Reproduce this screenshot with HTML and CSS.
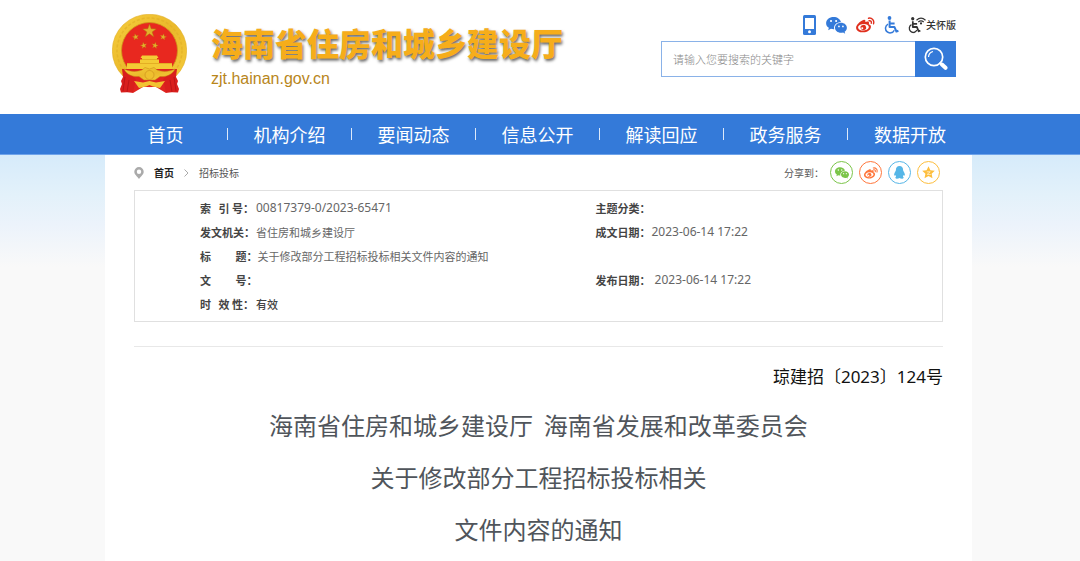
FILE: index.html
```html
<!DOCTYPE html>
<html lang="zh-CN">
<head>
<meta charset="utf-8">
<meta name="viewport" content="width=device-width, initial-scale=1">
<title>海南省住房和城乡建设厅</title>
<link rel="stylesheet" href="styles.css">
</head>
<body>
<svg class="sprite" aria-hidden="true">
  <symbol id="wechat" viewBox="0 0 22 18">
    <path fill="currentColor" fill-rule="evenodd" d="M8 0C3.400 0 0 2.900 0 6.500c0 2.100 1.100 3.800 2.900 5L2.200 14l2.900-1.500c1 .3 1.900.4 2.900.4h.6c-1-4 2.400-7.500 7.100-7.600C15 2.200 11.800 0 8 0zM5.200 3.200a1.100 1.100 0 1 1 0 2.200 1.100 1.100 0 0 1 0-2.200zm5.400 0a1.100 1.100 0 1 1 0 2.200 1.100 1.100 0 0 1 0-2.200z"/>
    <path fill="currentColor" fill-rule="evenodd" d="M15.700 6.200c-3.600 0-6.300 2.400-6.300 5.300s2.700 5.300 6.300 5.300c.8 0 1.600-.1 2.300-.4l2.200 1.300-.6-2c1.500-1 2.400-2.500 2.400-4.200 0-2.900-2.700-5.300-6.300-5.300zm-2.100 2.900a.9.9 0 1 1 0 1.800.9.9 0 0 1 0-1.800zm4.200 0a.9.9 0 1 1 0 1.800.9.9 0 0 1 0-1.800z"/>
  </symbol>
  <symbol id="weibo" viewBox="0 0 20 17">
    <path fill="currentColor" fill-rule="evenodd" d="M7.800 3.200c1.500-.6 2.500.1 2 2 1.800-.8 4.200-.8 4 1.300l-.3 1.100c1.600.5 2.400 1.500 2.300 3-.3 3.300-4 5.600-8.100 5.700C3.600 16.400 0 14.400 0 11.300 0 8.300 4.500 4.300 7.800 3.200zM7.500 7.400c-3.200.2-5.500 1.900-5.300 4 .2 2 2.800 3.300 6 3 3.100-.3 5.500-2 5.300-4-.2-2-2.800-3.200-6-3z"/>
    <path fill="currentColor" fill-rule="evenodd" d="M7.100 8.400a3 2.800 0 1 0 1.200 5.500 3 2.800 0 0 0-1.200-5.500zm-.7 2.500a1.100 1 0 1 1 .3 2 1.100 1 0 0 1-.3-2z"/>
    <path fill="none" stroke="currentColor" stroke-width="1.500" stroke-linecap="round" d="M13.200 1.300c3.600-.8 6.500 2.200 5.300 5.900M13.800 4c1.700-.4 2.900.9 2.300 2.600"/>
  </symbol>
  <symbol id="wheelchair" viewBox="0 0 15 18">
    <circle cx="5.500" cy="2" r="1.900" fill="currentColor"/>
    <path fill="none" stroke="currentColor" stroke-width="2" stroke-linejoin="round" d="M5.600 4.500v6.400h4.800l2 4.600 2-.8M6 7.400h4.600"/>
    <path fill="none" stroke="currentColor" stroke-width="1.500" d="M4 8.200a4.600 4.600 0 1 0 6.300 6"/>
  </symbol>
</svg>

<header class="header">
  <a class="brand" href="#">
    <svg class="emblem" viewBox="0 0 75 80" role="img" aria-label="国徽">
      <defs>
        <linearGradient id="gold" x1="0" y1="0" x2="1" y2="1">
          <stop offset="0" stop-color="#f6cd3c"/><stop offset=".5" stop-color="#eab92b"/><stop offset="1" stop-color="#f6cd3c"/>
        </linearGradient>
        <path id="star" d="M0-7 1.700-2.200 6.700-2.100 2.700.9 4.200 5.700 0 2.800-4.200 5.700-2.700.9-6.700-2.100-1.700-2.200z"/>
      </defs>
      <ellipse cx="37.500" cy="36.500" rx="37.200" ry="36.300" fill="url(#gold)" stroke="#e0ac22" stroke-width=".6"/>
      <circle cx="37.500" cy="36.500" r="32.500" fill="none" stroke="#e0ad25" stroke-width="1.500" stroke-dasharray="3 2" opacity=".6"/>
      <circle cx="37.500" cy="36.500" r="28" fill="#e8281f" stroke="#cf971b" stroke-width=".8"/>
      <g fill="#e3b02c" stroke="#b5710d" stroke-width=".5">
        <use href="#star" x="37.500" y="17"/>
        <use href="#star" transform="translate(23.600 23) scale(.48) rotate(-12)"/>
        <use href="#star" transform="translate(51.200 23) scale(.48) rotate(12)"/>
        <use href="#star" transform="translate(31.700 31.500) scale(.48) rotate(-12)"/>
        <use href="#star" transform="translate(43 31.500) scale(.48) rotate(12)"/>
      </g>
      <path fill="#f4cb35" d="M30 41.500h15l1.500 2.500H45v1.500h2v3.500h13v6H15v-6h13v-3.500h2V44h-1.500z"/>
      <path stroke="#d99b19" stroke-width=".6" d="M29 45.500h17M15 49.500h45"/>
      <path fill="#e02520" d="M13 55h49l-3 8 7 14-12 2-10-6H31l-10 6-12-2 6-14z"/>
      <path fill="#d91f1d" d="M10 55h6l8 11-3 12-12 .5L8 75l2-5-1-3 2-4zM65 55h-6l-8 11 3 12 12 .5 1-3.500-2-5 1-3-2-4z"/>
      <path fill="none" stroke="#b51215" stroke-width=".8" d="m13 63-2 14M17 66l-2 12M62 63l2 14M58 66l2 12"/>
      <path fill="url(#gold)" stroke="#c58512" stroke-width=".5" d="M12 55c6 3 13 3 18 1l3-2.500 4.500 1.500 4.500-1.500 3 2.500c5 2 12 2 18-1-3 6-9 8-15 7.500L43 66H32l-5-3.500C21 63 15 61 12 55z"/>
      <circle cx="37.500" cy="61" r="4.500" fill="#efc02e" stroke="#c98c1c" stroke-width=".6"/>
      <path fill="#f2c331" d="m22 67 9 1.500 6.500-1.500 6.500 1.500 9-1.500-5 7-7-1.500-3.500-1.500-3.500 1.500-7 1.500z"/>
    </svg>
    <span class="brand-text">
      <span class="brand-name">海南省住房和城乡建设厅</span>
      <span class="brand-url">zjt.hainan.gov.cn</span>
    </span>
  </a>
  <div class="tools">
    <nav class="quick" aria-label="快捷入口">
      <a class="blue" href="#" aria-label="手机版"><svg width="15" height="20" viewBox="0 0 15 20"><rect x="1" width="13" height="20" rx="1.500" fill="currentColor"/><path fill="#fff" d="M3 3h9v11H3z"/><circle cx="7.500" cy="16.800" r="1.500" fill="#fff"/></svg></a>
      <a class="blue" href="#" aria-label="微信"><svg width="21" height="17"><use href="#wechat"/></svg></a>
      <a class="red" href="#" aria-label="微博"><svg width="19" height="16"><use href="#weibo"/></svg></a>
      <a class="blue" href="#" aria-label="无障碍"><svg width="15" height="18"><use href="#wheelchair"/></svg></a>
      <a class="care" href="#"><svg width="18" height="17" viewBox="0 0 18 17"><g transform="scale(.86 .92)"><use href="#wheelchair" width="15" height="18"/></g><path fill="none" stroke="currentColor" stroke-width="1.200" d="M8.500 3.200q4.500-4 9 0M10.300 5q2.700-2.400 5.400 0"/><circle cx="13" cy="6.400" r="1.100" fill="currentColor"/></svg>关怀版</a>
    </nav>
    <form class="search" role="search">
      <input type="text" placeholder="请输入您要搜索的关键字" aria-label="搜索关键字">
      <button type="button" aria-label="搜索"><svg width="24" height="24" viewBox="0 0 24 24"><circle cx="10" cy="10" r="8.700" fill="none" stroke="#fff" stroke-width="1.700"/><path fill="none" stroke="#fff" stroke-width="1.200" d="M4.500 10Q4.800 5.500 9 4.500"/><path stroke="#fff" stroke-width="4" stroke-linecap="round" d="m18 17.500 3.500 3.300"/><path stroke="#fff" stroke-width="2" d="m15.500 15.500 2 2"/></svg></button>
    </form>
  </div>
</header>

<nav class="nav" aria-label="主导航">
  <ul>
    <li><a href="#">首页</a></li>
    <li><a href="#">机构介绍</a></li>
    <li><a href="#">要闻动态</a></li>
    <li><a href="#">信息公开</a></li>
    <li><a href="#">解读回应</a></li>
    <li><a href="#">政务服务</a></li>
    <li><a href="#">数据开放</a></li>
  </ul>
</nav>

<div class="page">
  <main class="sheet">
    <div class="topline">
      <nav class="crumbs" aria-label="当前位置">
        <svg width="10" height="12" viewBox="0 0 10 12"><path fill="#aaa" fill-rule="evenodd" d="M5 0a4.700 4.700 0 0 0-4.700 4.700C.3 7.500 3 9 5 12c2-3 4.700-4.500 4.700-7.300A4.700 4.700 0 0 0 5 0zm0 2.500a2.200 2.200 0 1 1 0 4.400 2.200 2.200 0 0 1 0-4.400z"/></svg>
        <a class="home" href="#">首页</a>
        <svg width="5" height="8" viewBox="0 0 5 8"><path fill="none" stroke="#aaa" d="m.5.500 3.500 3.500-3.500 3.500"/></svg>
        <a href="#">招标投标</a>
      </nav>
      <div class="share">
        <span>分享到：</span>
        <a class="green" href="#" aria-label="分享到微信"><svg width="14" height="12"><use href="#wechat"/></svg></a>
        <a class="orange" href="#" aria-label="分享到微博"><svg width="14" height="12"><use href="#weibo"/></svg></a>
        <a class="sky" href="#" aria-label="分享到QQ"><svg width="11" height="13" viewBox="0 0 11 13"><path fill="currentColor" d="M5.500 0C3 0 1.800 1.800 1.900 4.300 1.500 5.500.2 7.100.1 8.700c0 1 .4 1.200 1.200.2l.8 1.700c-1.300.8-.9 2.100.8 2.100 1.100 0 2-.2 2.600-.7.600.5 1.500.7 2.600.7 1.700 0 2.100-1.300.8-2.100l.8-1.700c.8 1 1.200.8 1.200-.2-.1-1.600-1.400-3.200-1.800-4.400C9.200 1.800 8 0 5.500 0z"/></svg></a>
        <a class="yellow" href="#" aria-label="分享到QQ空间"><svg width="13" height="13" viewBox="0 0 13 13"><path fill="currentColor" d="m6.500.3 1.900 4 4.400.5-3.200 3 .9 4.500-4-2.200-4 2.200.9-4.500-3.200-3 4.400-.5z"/><path fill="none" stroke="#fff" stroke-width=".6" d="M4.800 5.800h3.400L5.200 8.400l3.600.1"/></svg></a>
      </div>
    </div>

    <dl class="info">
      <div><dt>索   引 号：</dt><dd class="num">00817379-0/2023-65471</dd></div>
      <div><dt>主题分类：</dt><dd></dd></div>
      <div><dt>发文机关：</dt><dd>省住房和城乡建设厅</dd></div>
      <div><dt>成文日期：</dt><dd class="num">2023-06-14 17:22</dd></div>
      <div class="full"><dt>标&emsp;&emsp; 题：</dt><dd>关于修改部分工程招标投标相关文件内容的通知</dd></div>
      <div><dt>文&emsp;&emsp; 号：</dt><dd></dd></div>
      <div><dt>发布日期：</dt><dd class="num"> 2023-06-14 17:22</dd></div>
      <div class="full"><dt>时   效 性：</dt><dd class="strong">有效</dd></div>
    </dl>

    <article class="doc">
      <p class="doc-no">琼建招〔2023〕124号</p>
      <h1>海南省住房和城乡建设厅&nbsp;&nbsp;海南省发展和改革委员会<br>关于修改部分工程招标投标相关<br>文件内容的通知</h1>
    </article>
  </main>
</div>
</body>
</html>
```
FILE: styles.css
```css
:root {
  --blue: #347ad9;
  --gutter-left: 105px;
  --gutter-right: 108px;
  --cjk: "Noto Sans CJK SC", "Noto Sans", sans-serif;
  --mixed: "Noto Sans", "Noto Sans CJK SC", sans-serif;
}

* { box-sizing: border-box; }

body {
  margin: 0;
  min-height: 100vh;
  display: flex;
  flex-direction: column;
  background: #fff;
  color: #555;
  font-family: var(--cjk);
  font-size: 11px;
}

a { color: inherit; text-decoration: none; }
svg { display: block; flex: none; }
ul, dl, dd, p, h1 { margin: 0; padding: 0; }
.sprite { position: absolute; width: 0; height: 0; }

.header {
  display: flex;
  justify-content: space-between;
  align-items: flex-start;
  padding: 14px 124px 20px 112px;
}

.brand { display: flex; gap: 24px; }
.emblem { width: 75px; height: 80px; }
.brand-text { display: flex; flex-direction: column; gap: 4px; padding-top: 5px; }
.brand-name {
  color: #f6ad1a;
  font-size: 32px;
  font-weight: 900;
  line-height: 46px;
  white-space: nowrap;
  text-shadow: 1px 2px 3px rgba(0, 0, 0, .6);
}
.brand-url {
  color: #b8861b;
  font: 16px/20px "Liberation Sans", sans-serif;
}

.tools { width: 295px; }
.quick {
  display: flex;
  justify-content: flex-end;
  align-items: center;
  gap: 9px;
  height: 22px;
  margin-bottom: 5px;
}
.blue { color: var(--blue); }
.red { color: #e0301e; }
.care {
  display: flex;
  align-items: center;
  color: #333;
  font-size: 10px;
  font-weight: 500;
  line-height: 16px;
}

.search { display: flex; height: 36px; }
.search input {
  flex: 1;
  min-width: 0;
  padding: 0 11px;
  border: 1px solid #8ab2e8;
  border-right: 0;
  background: #fff;
  color: #555;
  font: 300 11px var(--cjk);
}
.search input::placeholder { color: #888; opacity: 1; }
.search button {
  display: grid;
  place-items: center;
  width: 41px;
  padding: 0;
  border: 0;
  background: var(--blue);
}

.nav {
  background: var(--blue);
  border-bottom: 1px solid #6ea3ea;
  padding: 0 108px 0 104px;
}
.nav ul { display: flex; list-style: none; }
.nav li {
  flex: 1;
  display: flex;
  align-items: center;
  color: #fff;
  font-size: 18px;
  line-height: 40px;
}
.nav a { flex: 1; text-align: center; white-space: nowrap; }
.nav li:not(:last-child)::after {
  content: "";
  width: 1px;
  height: 12px;
  background: #dce9fa;
}

.page {
  flex: 1;
  display: flex;
  padding: 0 var(--gutter-right) 0 var(--gutter-left);
  background: #f9f9f9 linear-gradient(#d6ebfa, #e3f1fa 40px, #ecf3fb 70px, #f9f9f9 112px) no-repeat;
}
.sheet { flex: 1; padding: 0 29px; background: #fff; }

.topline {
  display: flex;
  justify-content: space-between;
  align-items: center;
  height: 35px;
  font-size: 10px;
}
.crumbs { display: flex; align-items: center; gap: 10px; }
.home { color: #222; font-weight: 700; }
.share { display: flex; align-items: center; gap: 6px; padding-right: 3px; }
.share a {
  display: grid;
  place-items: center;
  width: 23px;
  height: 23px;
  border: 1px solid currentColor;
  border-radius: 50%;
}
.green { color: #7bc549; }
.orange { color: #ff763b; }
.sky { color: #56b6e7; }
.yellow { color: #fdbe3d; }

.info {
  display: grid;
  grid-template-columns: 396fr 347fr;
  padding: 5px 0 5px 65px;
  border: 1px solid #e0e0e0;
}
.info div { display: flex; line-height: 24px; white-space: pre; }
.info .full { grid-column: 1 / -1; }
.info dt { min-width: 56px; font-weight: 700; color: #444; }
.info dd { color: #666; }
.info .num { font-family: var(--mixed); font-size: 12px; }
.info .strong { font-weight: 500; color: #444; }

.doc { margin-top: 24px; border-top: 1px solid #e8e8e8; }
.doc-no {
  padding-top: 15px;
  text-align: right;
  color: #111;
  font: 17px/30px var(--mixed);
}
.doc h1 {
  padding-top: 7px;
  text-align: center;
  color: #50555b;
  font-size: 24px;
  font-weight: 400;
  line-height: 52px;
}
```
